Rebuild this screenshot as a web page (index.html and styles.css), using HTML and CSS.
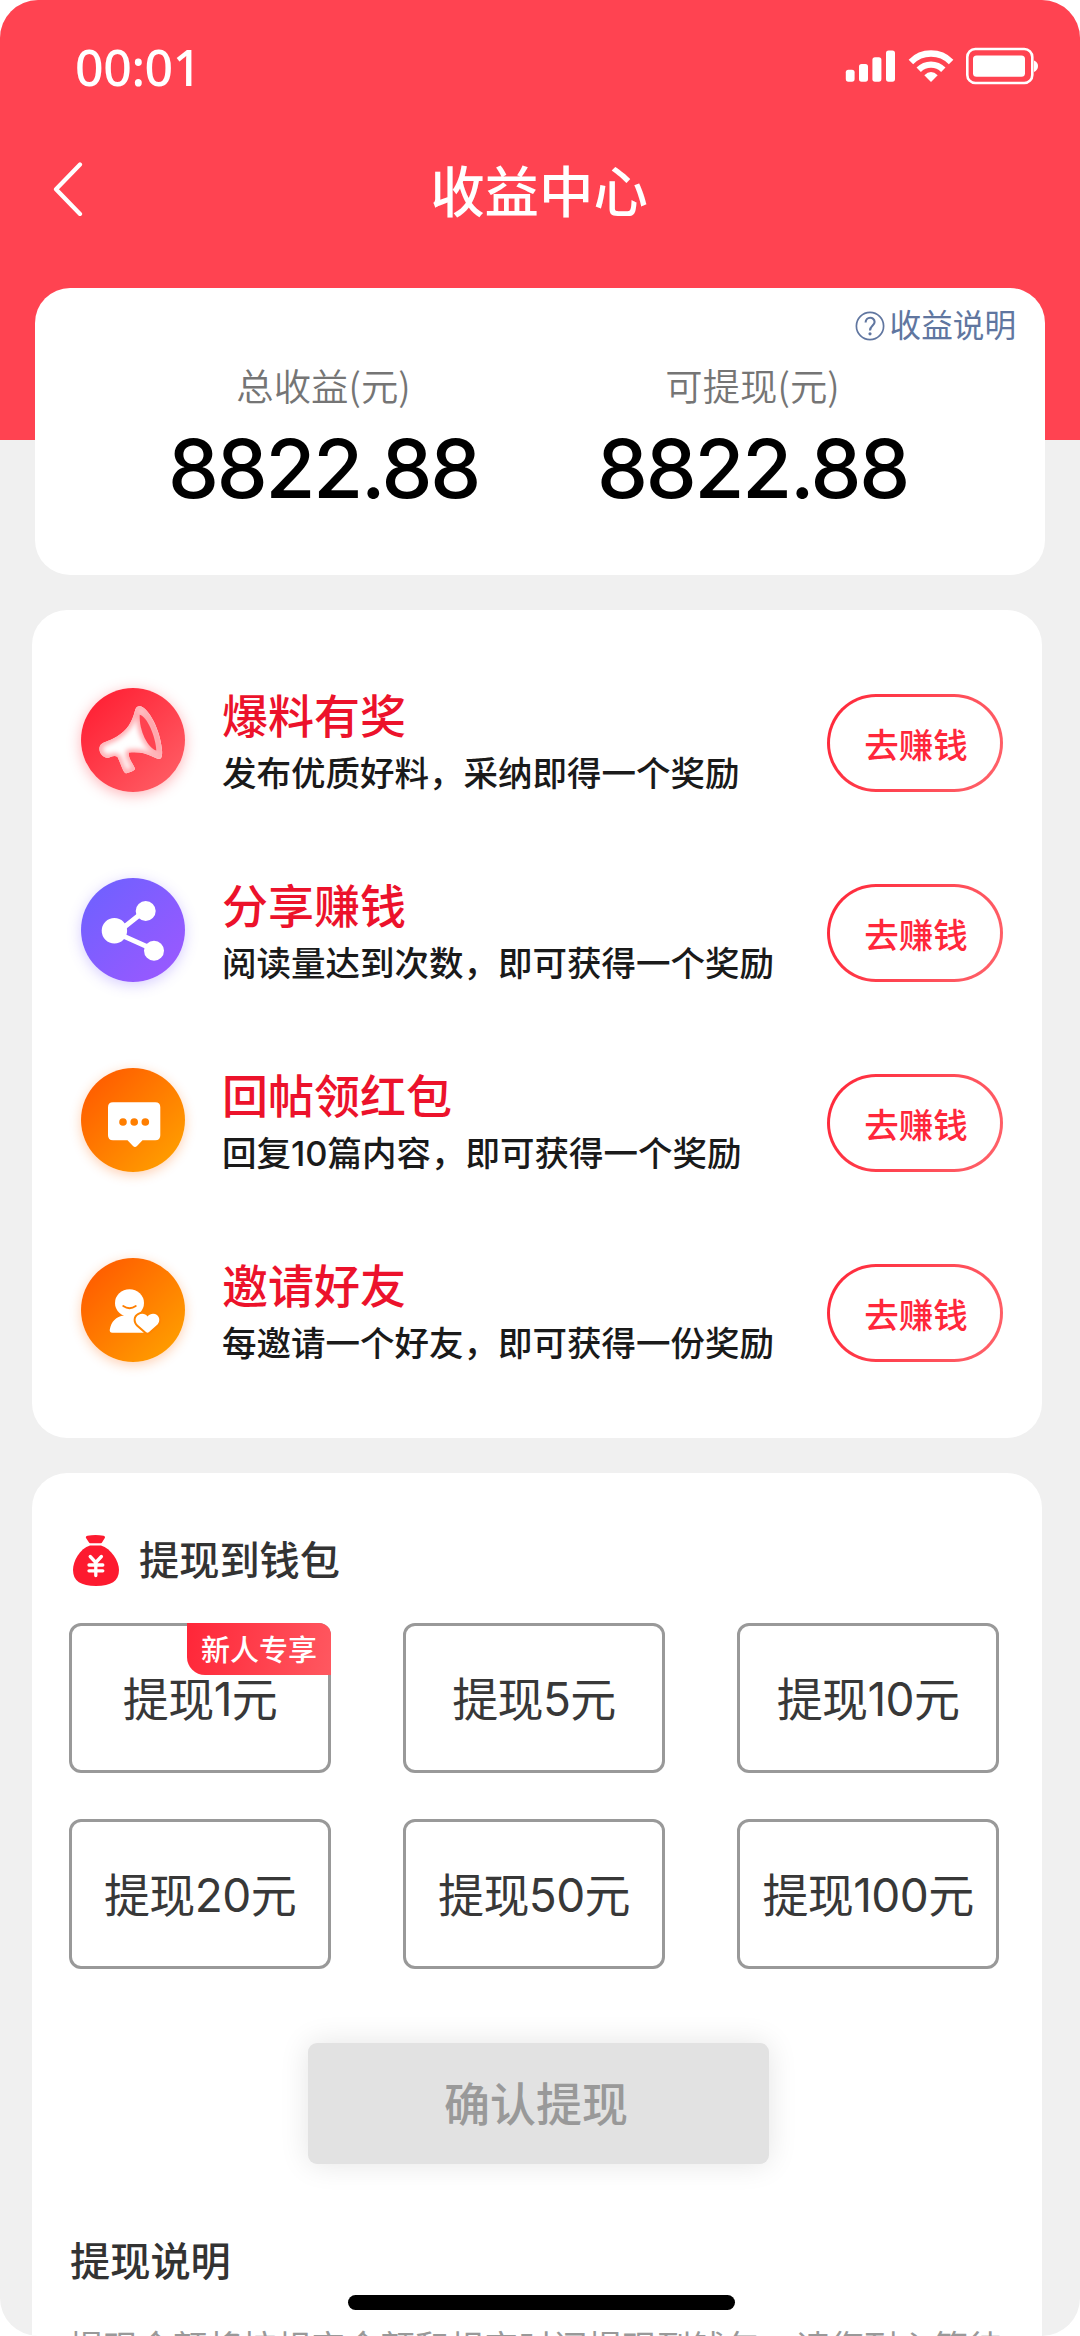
FILE: index.html
```html
<!DOCTYPE html>
<html lang="zh-CN">
<head>
<meta charset="utf-8">
<title>收益中心</title>
<link rel="stylesheet" href="styles.css">
</head>
<body>
<div class="phone">
  <header class="header">
    <div class="status">
      <span class="time">00:01</span>
      <svg class="status-icons" width="194" height="38" viewBox="0 0 194 38" fill="#fff">
        <rect x="0.8" y="22.7" width="8.8" height="12" rx="2.6"/>
        <rect x="14" y="17" width="9" height="17.7" rx="2.6"/>
        <rect x="27.4" y="10.2" width="9" height="24.5" rx="2.6"/>
        <rect x="41" y="3.5" width="9" height="31.2" rx="2.6"/>
        <g transform="translate(64 3)">
          <path d="M1.9 11.9A28.4 28.4 0 0 1 42.1 11.9" fill="none" stroke="#fff" stroke-width="6.4"/>
          <path d="M9.7 19.7A17.4 17.4 0 0 1 34.3 19.7" fill="none" stroke="#fff" stroke-width="6.2"/>
          <path d="M22 32L15.3 25.2Q22 18.6 28.7 25.2Z"/>
        </g>
        <rect x="122.3" y="2" width="65" height="34" rx="8" fill="none" stroke="#fff" stroke-width="2.6"/>
        <rect x="128" y="8.4" width="52" height="21.4" rx="3.6"/>
        <path d="M189 13.4Q193 15 193 19T189 25Z"/>
      </svg>
    </div>
    <nav class="nav">
      <svg class="back" width="30" height="54" viewBox="0 0 30 54" fill="none" stroke="#fff" stroke-width="4.2" stroke-linecap="round" stroke-linejoin="round"><path d="M27 2.5L3 27.3L27 52"/></svg>
      <h1 class="title">收益中心</h1>
    </nav>
  </header>

  <section class="card summary">
    <a class="help">
      <svg width="30" height="30" viewBox="0 0 30 30" fill="none" stroke="#6076a0" stroke-width="1.7"><circle cx="15" cy="15" r="13.6"/><path d="M10.6 11.6C10.6 5.2 19.6 5.4 19.6 11C19.6 14.6 15 14.4 15 19.6" stroke-width="2.1"/><circle cx="15" cy="22.8" r="1.6" fill="#6076a0" stroke="none"/></svg>
      <span>收益说明</span>
    </a>
    <div class="totals">
      <div class="total"><div class="total-label">总收益(元)</div><div class="total-value">8822.88</div></div>
      <div class="total"><div class="total-label">可提现(元)</div><div class="total-value">8822.88</div></div>
    </div>
  </section>

  <section class="card tasks">
    <div class="task">
      <svg class="task-icon red" viewBox="0 0 104 104">
        <defs>
          <clipPath id="horn"><path d="M59.5 18.3C67 20 79 40 81 62C81.4 67 81 70.5 78.3 71C74 71 66 62.5 48 64.5C46.5 68 50.5 73.5 54 80.5C54.5 82.5 47 85 44.7 85.3C42 84.5 39 73.5 36.5 69C33 66.5 30 69.5 26.5 70C20 69 17 62 19 58C21 53.5 27 54 36 48.5C46 42 51 35 54.3 21.5C55.5 18.5 57 17.8 59.5 18.3Z"/></clipPath>
          <filter id="soft"><feGaussianBlur stdDeviation="2.4"/></filter>
        </defs>
        <g clip-path="url(#horn)">
          <rect width="104" height="104" fill="#fff"/>
          <g filter="url(#soft)" fill="none" stroke="#ffa5aa" stroke-width="6">
            <path d="M59.5 18.3C67 20 79 40 81 62C81.4 67 81 70.5 78.3 71C74 71 66 62.5 48 64.5C46.5 68 50.5 73.5 54 80.5C54.5 82.5 47 85 44.7 85.3C42 84.5 39 73.5 36.5 69C33 66.5 30 69.5 26.5 70C20 69 17 62 19 58C21 53.5 27 54 36 48.5C46 42 51 35 54.3 21.5C55.5 18.5 57 17.8 59.5 18.3Z"/>
            <path d="M58.700 26.800C66 28.500 74.500 48 75.300 62.500C67 60.500 58 43 58.700 26.800Z"/>
          </g>
        </g>
        <path d="M58.700 26.800C66 28.500 74.500 48 75.300 62.500C67 60.500 58 43 58.700 26.800Z" fill="#ff4350"/>
      </svg>
      <div class="task-body"><h2 class="task-title">爆料有奖</h2><p class="task-desc">发布优质好料，采纳即得一个奖励</p></div>
      <button class="earn">去赚钱</button>
    </div>
    <div class="task">
      <svg class="task-icon violet" viewBox="0 0 104 104" fill="#fff">
        <path d="M64.7 33L33.3 58M33.3 55L73 72.7" transform="translate(0 -1)" stroke="#fff" stroke-width="5"/>
        <circle cx="33.4" cy="52.7" r="12.7"/><circle cx="64.7" cy="33" r="10"/><circle cx="73" cy="72.7" r="10"/>
      </svg>
      <div class="task-body"><h2 class="task-title">分享赚钱</h2><p class="task-desc">阅读量达到次数，即可获得一个奖励</p></div>
      <button class="earn">去赚钱</button>
    </div>
    <div class="task">
      <svg class="task-icon orange" viewBox="0 0 104 104">
        <path fill="#fff" d="M32 34.3H74.3Q79.3 34.3 79.3 39.3V67.3Q79.3 72.3 74.3 72.3H61.5L56 78Q54 80 52 78L46.5 72.3H32Q27 72.3 27 67.3V39.3Q27 34.3 32 34.3Z"/>
        <g fill="#ff7e00"><circle cx="42" cy="54" r="3.8"/><circle cx="53.2" cy="54" r="3.8"/><circle cx="64.3" cy="54" r="3.8"/></g>
      </svg>
      <div class="task-body"><h2 class="task-title">回帖领红包</h2><p class="task-desc">回复10篇内容，即可获得一个奖励</p></div>
      <button class="earn">去赚钱</button>
    </div>
    <div class="task">
      <svg class="task-icon orange" viewBox="0 0 104 104">
        <ellipse cx="48.5" cy="45" rx="14.5" ry="13.7" fill="#fff"/>
        <path d="M41 53H54V60L63 74.7H31.5C29 74.7 28.5 73.5 28.8 71.5C30.3 63.5 35 58.5 43 57.5Z" fill="#fff"/>
        <path d="M42.2 48Q48.5 52.5 54.8 48" fill="none" stroke="#ff7e00" stroke-width="1.8" stroke-linecap="round"/>
        <path d="M66.5 58.5C69 55.5 73 55 76 57C79.5 60 78.5 64 76.5 66.5L68 74Q66.5 75.3 65 74L57 67C53.5 63.500 54 59 57.5 57C60.5 55 64.5 55.5 66.5 58.5Z" fill="#fff" stroke="#ff8500" stroke-width="4" paint-order="stroke"/>
      </svg>
      <div class="task-body"><h2 class="task-title">邀请好友</h2><p class="task-desc">每邀请一个好友，即可获得一份奖励</p></div>
      <button class="earn">去赚钱</button>
    </div>
  </section>

  <section class="card wallet">
    <div class="wallet-head">
      <svg width="46" height="52" viewBox="0 0 46 52" fill="#fd1a2f">
        <path d="M14.5 0.8Q22.5 -0.6 30.5 0.8Q32.5 1.3 31.8 3L29 7.5Q28.700 8.2 28 8.2H17Q16.3 8.2 16 7.5L13 3Q12.3 1.3 14.5 0.8Z"/>
        <path d="M17 10.5H28C38 13.5 46 26 46 35C46 46 38 51 23 51S0 46 0 35C0 26 7 13.5 17 10.5Z"/>
        <path d="M17.2 21.5L22.8 27.5L28.4 21.5M22.8 27.5V40.5M16 30H29.8M16 35.8H29.8" fill="none" stroke="#fff" stroke-width="3.3" stroke-linecap="round" stroke-linejoin="round"/>
      </svg>
      <h2 class="section-title">提现到钱包</h2>
    </div>
    <div class="amounts">
      <div class="amount">提现1元<span class="badge">新人专享</span></div>
      <div class="amount">提现5元</div>
      <div class="amount">提现10元</div>
      <div class="amount">提现20元</div>
      <div class="amount">提现50元</div>
      <div class="amount">提现100元</div>
    </div>
    <button class="confirm">确认提现</button>
    <h2 class="section-title note-title">提现说明</h2>
    <p class="note">提现金额将按规定金额和规定时间提现到钱包，请您耐心等待</p>
  </section>
  <div class="home-bar"></div>
</div>
</body>
</html>
```
FILE: styles.css
```css
* { box-sizing: border-box; margin: 0; padding: 0; }

body {
  width: 1080px;
  height: 2336px;
  overflow: hidden;
  background: #fff;
  font-family: Inter, "Noto Sans CJK SC", sans-serif;
}

button { border: 0; font-family: inherit; }
svg { display: block; flex: none; }

.phone {
  position: relative;
  height: 2336px;
  overflow: hidden;
  border-radius: 38px;
  background: #f0f0f0;
}

.header { height: 440px; background: #ff4351; color: #fff; }

.status {
  display: flex;
  justify-content: space-between;
  align-items: center;
  height: 132px;
  padding: 0 41px 0 75px;
}
.time { font: 500 50px/60px "Noto Sans", sans-serif; letter-spacing: -0.4px; padding-top: 1px; }

.nav {
  display: grid;
  grid-template-columns: 1fr auto 1fr;
  align-items: center;
  height: 114px;
  padding: 0 55px 0 53px;
}
.title { font-size: 54.4px; font-weight: 500; line-height: 80px; padding-top: 5px; }

.card { border-radius: 35px; background: #fff; }

.summary {
  height: 287px;
  margin: -152px 35px 0;
  padding: 18px 29px 0 0;
}
.help {
  display: flex;
  justify-content: flex-end;
  align-items: center;
  gap: 5px;
  height: 39px;
  color: #6076a0;
  font-size: 31.6px;
  line-height: 39px;
}
.totals {
  display: grid;
  grid-template-columns: 429px 429px;
  padding-left: 74px;
  text-align: center;
}
.total-label {
  padding-top: 15px;
  color: #757575;
  font: 350 37.4px/50px "Noto Sans CJK SC", sans-serif;
}
.total-value {
  color: #000;
  font-size: 81px;
  font-weight: 500;
  line-height: 90px;
  padding-top: 14px;
  letter-spacing: -2.2px;
}

.tasks {
  display: flex;
  flex-direction: column;
  gap: 70px;
  height: 828px;
  margin: 35px 38px 0 32px;
  padding: 69px 39px 0 49px;
}
.task { display: flex; height: 120px; }
.task-icon { width: 104px; height: 104px; margin-top: 9px; border-radius: 50%; }
.red { background: linear-gradient(135deg, #ff2437 15%, #ff5a62 88%); box-shadow: 0 3px 14px rgba(255, 70, 80, 0.4); }
.violet { background: linear-gradient(135deg, #7360ff 15%, #9859ff 88%); box-shadow: 0 3px 14px rgba(120, 90, 255, 0.3); }
.orange { background: linear-gradient(135deg, #ff6000 15%, #ff9c00 88%); box-shadow: 0 3px 12px rgba(255, 110, 20, 0.32); }

.task-body { flex: 1; padding: 9px 0 0 37px; }
.task-title { color: #ec122b; font-size: 46px; font-weight: 500; line-height: 56px; }
.task-desc { color: #1a1a1a; font-size: 34.5px; font-weight: 500; line-height: 40px; padding-top: 10px; white-space: nowrap; }

.earn {
  width: 176px;
  height: 98px;
  margin-top: 15px;
  padding: 0 0 1px 2px;
  border: 3px solid transparent;
  border-radius: 49px;
  background: linear-gradient(#fff, #fff) padding-box, linear-gradient(110deg, #ff2638, #ff646b) border-box;
  color: #ff273a;
  font-size: 34.5px;
  font-weight: 500;
}

.wallet {
  height: 900px;
  margin: 35px 38px 0 32px;
  padding: 57px 39px 0 37px;
}
.wallet-head { display: flex; align-items: center; gap: 20px; height: 58px; padding: 3px 0 0 4px; }
.section-title { color: #333; font-size: 40.2px; font-weight: 500; line-height: 50px; }

.amounts {
  display: grid;
  grid-template-columns: repeat(3, 262px);
  grid-auto-rows: 150px;
  gap: 46px 72px;
  margin-top: 35px;
}
.amount {
  position: relative;
  display: flex;
  justify-content: center;
  align-items: center;
  padding: 0 0 4px 0;
  border: 3px solid #999;
  border-radius: 12px;
  color: #383838;
  font-size: 46px;
  letter-spacing: -0.6px;
}
.badge {
  position: absolute;
  top: -3px;
  right: -3px;
  width: 144px;
  height: 52px;
  border-radius: 0 12px 0 18px;
  background: linear-gradient(100deg, #ff2638, #ff5860);
  color: #fff;
  font-size: 29px;
  font-weight: 500;
  letter-spacing: 0;
  line-height: 55px;
  text-align: center;
}

.confirm {
  display: block;
  width: 461px;
  height: 121px;
  margin: 74px auto 0 239px;
  padding: 0 5px 6px 0;
  border-radius: 9px;
  background: #e2e2e2;
  box-shadow: 0 0 30px rgba(0, 0, 0, 0.11);
  color: #999;
  font-size: 46px;
  font-weight: 500;
}
.note-title { margin-top: 73px; padding-left: 1px; }
.note { margin-top: 34px; color: #999; font-size: 34.6px; line-height: 52px; white-space: nowrap; }

.home-bar {
  position: absolute;
  left: 348px;
  bottom: 26px;
  width: 387px;
  height: 15px;
  border-radius: 8px;
  background: #000;
}
```
